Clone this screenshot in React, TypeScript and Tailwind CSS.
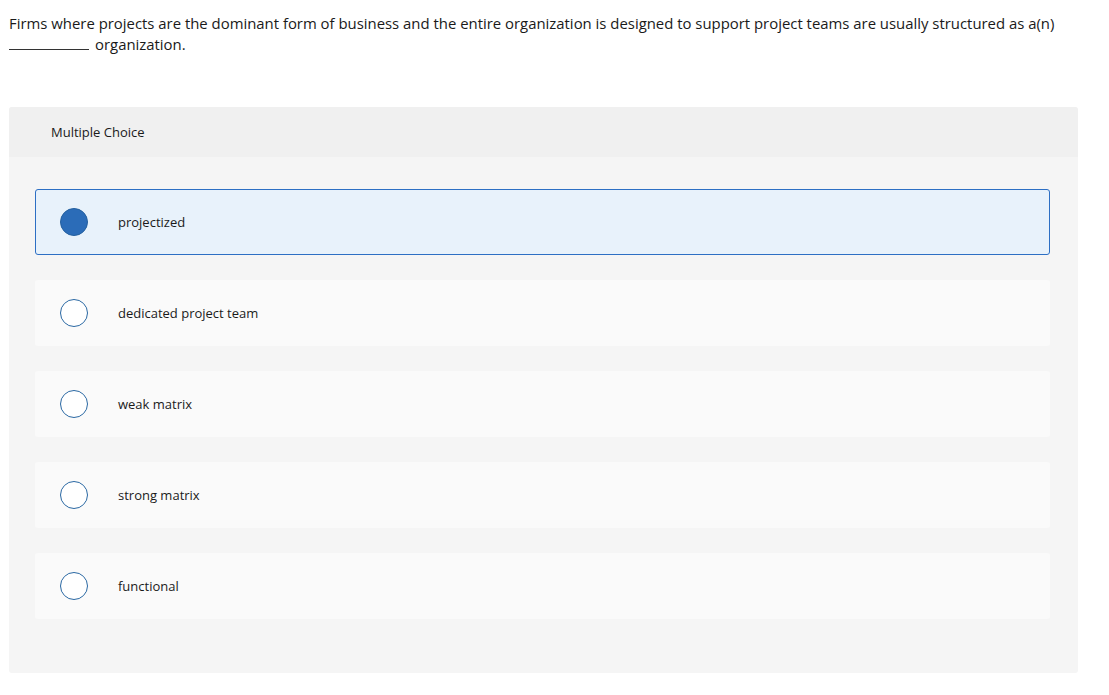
import React from "react";

const options = ["projectized", "dedicated project team", "weak matrix", "strong matrix", "functional"];

export default function App() {
  return (
    <div className="w-[1109px] h-[695px] bg-white text-[#1a1a1a]" style={{ fontFamily: '"Open Sans", Arial, sans-serif' }}>
      <div className="pl-[9px] pr-[40px] pt-[13px] text-[14.9px] leading-[21px]">
        Firms where projects are the dominant form of business and the entire organization is designed to support project teams are usually structured as a(n)
        <br />
        <span className="inline-block w-[80px] border-b border-[#333] mr-[6px]"></span>organization.
      </div>
      <div className="ml-[9px] mt-[52px] w-[1069px] h-[566px] rounded-[3px] bg-[#f5f5f5] overflow-hidden">
        <div className="h-[50px] bg-[#f0f0f0] flex items-center pl-[42px] text-[13px] pt-[1px]">Multiple Choice</div>
        <div className="pt-[32px] pl-[26px] pr-[28px] flex flex-col gap-[25px]">
          {options.map((o, i) => (
            <div
              key={o}
              className={
                i === 0
                  ? "h-[66px] rounded-[3px] border border-[#2d6fc4] bg-[#e8f2fb] flex items-center pl-[24px]"
                  : "h-[66px] rounded-[3px] border border-transparent bg-[#fafafa] flex items-center pl-[24px]"
              }
            >
              {i === 0 ? (
                <div className="w-[28px] h-[28px] shrink-0 rounded-full bg-[#2b6cb8] border border-[#24609f]"></div>
              ) : (
                <div className="w-[28px] h-[28px] shrink-0 rounded-full border-[1.5px] border-[#2a68a3] bg-white"></div>
              )}
              <div className="ml-[30px] text-[13px] pt-[1px]">{o}</div>
            </div>
          ))}
        </div>
      </div>
    </div>
  );
}
